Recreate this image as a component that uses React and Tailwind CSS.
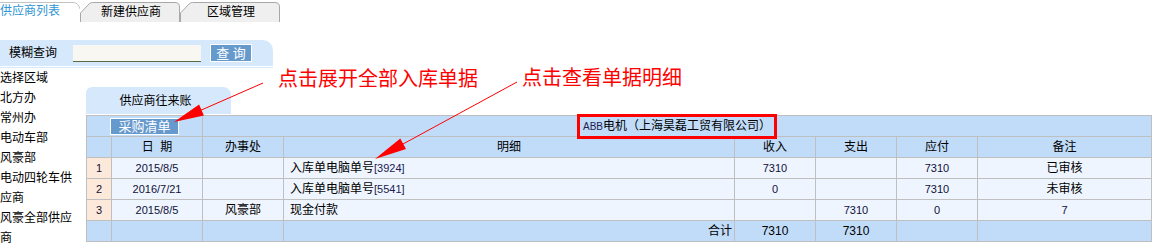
import React from 'react';

const rows = [
  { no: 1, date: '2015/8/5', office: '', detail: '入库单电脑单号', code: '[3924]', income: '7310', pay: '', due: '7310', note: '已审核' },
  { no: 2, date: '2016/7/21', office: '', detail: '入库单电脑单号', code: '[5541]', income: '0', pay: '', due: '7310', note: '未审核' },
  { no: 3, date: '2015/8/5', office: '风豪部', detail: '现金付款', code: '', income: '', pay: '7310', due: '0', note: '7' },
];

const regions = ['选择区域', '北方办', '常州办', '电动车部', '风豪部', '电动四轮车供应商', '风豪全部供应商'];

// arrow head triangle from line start (ax, ay) to tip (tx, ty)
function head(ax, ay, tx, ty, len, hw) {
  const dx = tx - ax;
  const dy = ty - ay;
  const l = Math.sqrt(dx * dx + dy * dy);
  const ux = dx / l;
  const uy = dy / l;
  const bx = tx - ux * len;
  const by = ty - uy * len;
  const nx = -uy * hw;
  const ny = ux * hw;
  return `${tx},${ty} ${bx + nx},${by + ny} ${bx - nx},${by - ny}`;
}

function Tab({ label }) {
  return (
    <div className="relative w-[100px] h-[22px] flex items-center justify-center">
      <svg className="absolute inset-0" width="100" height="22" viewBox="0 0 100 22">
        <path d="M0.5,22 V13 L9,4 Q10.5,2.5 12.5,2.5 H95 Q99.5,2.5 99.5,7 V22" fill="#efefef" stroke="#a8a8a8" strokeWidth="1" />
      </svg>
      <span className="relative text-[12px] text-black leading-none pt-[2px] pl-[2px]">{label}</span>
    </div>
  );
}

function App() {
  const th = 'border border-[#bfbfbf] bg-[#c1dcf9] p-0 font-normal text-[12px] text-black text-center';
  const td = 'border border-[#bfbfbf] bg-[#eef5fe] p-0 text-center';
  const num = 'text-[11px] text-[#10103a]';

  return (
    <div className="relative w-[1155px] h-[243px] overflow-hidden bg-white font-['Liberation_Sans','Noto_Sans_CJK_SC',sans-serif] text-black">
      {/* top tabs */}
      <div className="flex h-[22px]">
        <div className="relative w-[80px] h-[22px]">
          <svg className="absolute inset-0" width="80" height="22" viewBox="0 0 80 22">
            <path d="M0,2.5 H73 Q78.5,2.5 80,9" fill="none" stroke="#c4c4c4" strokeWidth="1" />
          </svg>
          <span className="relative block text-[12px] leading-none pt-[5px] text-[#2f95d6]">供应商列表</span>
        </div>
        <Tab label="新建供应商" />
        <Tab label="区域管理" />
      </div>

      {/* search bar */}
      <div className="mt-[18px] w-[273px] h-[26px] bg-[#d6e9fc] rounded-tr-[10px] flex items-center">
        <span className="pl-[9px] text-[12px] leading-none">模糊查询</span>
        <input className="ml-[16px] w-[128px] h-[17px] bg-[#f8f7f2] border-b border-[#566c41] outline-none" />
        <button className="ml-[9px] w-[42px] h-[18px] bg-[#6699cc] border border-white text-white text-[13px] leading-none">查&nbsp;询</button>
      </div>
      <div className="mt-[1px] w-[273px] h-[1px] bg-[#d6e9fc]" />

      <div className="flex">
        {/* region list */}
        <div className="w-[78px] text-[12px] leading-[20px]">
          {regions.map((r) => (
            <div key={r}>{r}</div>
          ))}
        </div>

        {/* account panel */}
        <div className="ml-[8px] mt-[19px] w-[1065px]">
          <div className="w-[145px] h-[27px] bg-[#d6e9fc] rounded-tl-[6px] rounded-tr-[8px] flex items-center justify-center pr-[6px] text-[12px]">
            供应商往来账
          </div>
          <table className="mt-[1px] w-[1065px] table-fixed border-collapse">
            <colgroup>
              <col className="w-[25px]" />
              <col className="w-[91px]" />
              <col className="w-[81px]" />
              <col className="w-[451px]" />
              <col className="w-[81px]" />
              <col className="w-[81px]" />
              <col className="w-[81px]" />
              <col className="w-[174px]" />
            </colgroup>
            <thead>
              <tr className="h-[21px]">
                <th colSpan={2} className={th}>
                  <span className="inline-flex items-center justify-center align-middle w-[69px] h-[17px] bg-[#6699cc] border border-white text-white text-[13px] leading-none">采购清单</span>
                </th>
                <th colSpan={6} className={th}>
                  <span className="inline-block align-middle w-[194px] leading-[18px] outline-[3px] outline-solid outline-[#ff0000] text-[12px]">
                    <span className="text-[10px] text-[#202050]">ABB</span>电机（上海昊磊工贸有限公司）
                  </span>
                </th>
              </tr>
              <tr className="h-[21px]">
                <th className={th}></th>
                <th className={th}>日&nbsp;&nbsp;期</th>
                <th className={th}>办事处</th>
                <th className={th}>明细</th>
                <th className={th}>收入</th>
                <th className={th}>支出</th>
                <th className={th}>应付</th>
                <th className={th}>备注</th>
              </tr>
            </thead>
            <tbody>
              {rows.map((r) => (
                <tr key={r.no} className="h-[21px]">
                  <td className={`${td} bg-[#fde9d9] ${num}`}>{r.no}</td>
                  <td className={`${td} ${num}`}>{r.date}</td>
                  <td className={`${td} text-[12px]`}>{r.office}</td>
                  <td className={`${td} text-left pl-[6px] text-[12px]`}>
                    {r.detail}
                    <span className="text-[11px] text-[#202050]">{r.code}</span>
                  </td>
                  <td className={`${td} ${num}`}>{r.income}</td>
                  <td className={`${td} ${num}`}>{r.pay}</td>
                  <td className={`${td} ${num}`}>{r.due}</td>
                  <td className={`${td} ${r.note === '7' ? num : 'text-[12px]'}`}>{r.note}</td>
                </tr>
              ))}
              <tr className="h-[21px]">
                <td className={th}></td>
                <td className={th}></td>
                <td className={th}></td>
                <td className={`${th} text-right pr-[2px]`}>合计</td>
                <td className={`${th} ${num}`}>7310</td>
                <td className={`${th} ${num}`}>7310</td>
                <td className={th}></td>
                <td className={th}></td>
              </tr>
            </tbody>
          </table>
        </div>
      </div>

      {/* annotations */}
      <div className="absolute left-[278px] top-[69px] text-[20px] leading-[20px] text-[#ff0000]">点击展开全部入库单据</div>
      <div className="absolute left-[522px] top-[68px] text-[20px] leading-[20px] text-[#ff0000]">点击查看单据明细</div>
      <svg className="absolute left-0 top-0 pointer-events-none" width="1155" height="243" viewBox="0 0 1155 243">
        <line x1="263" y1="83" x2="190" y2="115" stroke="#ff0000" strokeWidth="1" />
        <polygon points={head(263, 83, 174, 122, 30, 6)} fill="#ff0000" />
        <line x1="517" y1="82" x2="392" y2="150" stroke="#ff0000" strokeWidth="1" />
        <polygon points={head(517, 82, 375, 159, 32, 6)} fill="#ff0000" />
      </svg>
    </div>
  );
}

export default App;
